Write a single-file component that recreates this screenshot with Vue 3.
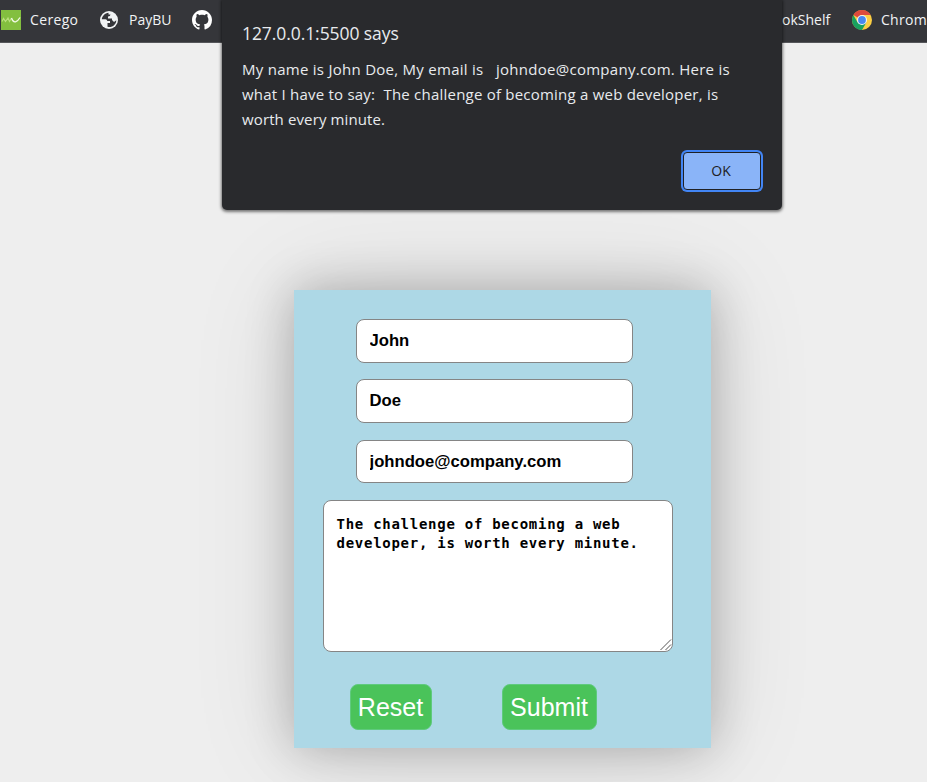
<script setup>
import { ref } from 'vue'

const first = ref('John')
const last = ref('Doe')
const email = ref('johndoe@company.com')
const message = ref('The challenge of becoming a web developer, is worth every minute.')
</script>

<template>
  <div class="page">
    <nav class="bookmarks">
      <div class="group">
        <svg class="cerego" viewBox="0 0 20 20">
          <rect width="20" height="20" fill="#83bf3f" />
          <path d="M1 11.500 L2.500 8.500 L4.500 11.500 L7 8 L8.500 11.500 L10.500 8" fill="none" stroke="#b9e07c" stroke-width="1.200" />
          <path d="M10.500 8 Q12 12.500 14.500 11.800 Q17 11 19 7.500" fill="none" stroke="#f2fae6" stroke-width="1.300" />
        </svg>
        <span class="cerego-label">Cerego</span>
        <svg class="globe" viewBox="0 0 18 18">
          <circle cx="9" cy="9" r="9" fill="#f1f3f4" />
          <path d="M8.500 1.700 C5 2 2 5 1.800 8.300 H5.500 Q7 8.500 7.300 10 H10 V12 H7.500 V15.800 C12 17 16.300 13.500 16.300 9.200 L14 11 L12 9 V7.500 H8 V5.500 Q10.500 5.500 10.500 3.500 H8.500 Z" fill="#35363a" />
        </svg>
        <span class="paybu-label">PayBU</span>
        <svg class="github" viewBox="0 0 16 16">
          <path fill="#fff" d="M8 0C3.58 0 0 3.58 0 8c0 3.54 2.29 6.53 5.47 7.590.4.070.55-.17.55-.38 0-.19-.01-.82-.01-1.490-2.010.37-2.530-.49-2.690-.94-.09-.23-.48-.94-.82-1.130-.28-.15-.68-.52-.01-.530.63-.01 1.080.58 1.230.820.72 1.210 1.870.87 2.330.660.07-.520.28-.870.510-1.070-1.780-.2-3.640-.89-3.640-3.950 0-.870.31-1.590.82-2.150-.08-.2-.36-1.020.08-2.120 0 0 .67-.21 2.200.820.64-.18 1.320-.27 2-.270s1.360.09 2 .270c1.530-1.040 2.200-.82 2.200-.820.44 1.100.16 1.920.08 2.120.510.560.820 1.270.820 2.150 0 3.070-1.870 3.750-3.650 3.950.290.250.540.730.540 1.480 0 1.070-.01 1.930-.01 2.200 0 .210.150.460.550.380A8.010 8.010 0 0 0 16 8c0-4.420-3.580-8-8-8z" />
        </svg>
      </div>
      <div class="group right">
        <span class="shelf-label">okShelf</span>
        <svg class="chrome" viewBox="0 0 20 20">
          <circle cx="10" cy="10" r="10" fill="#fbce43" />
          <path d="M10 10 L1.340 5 A10 10 0 0 1 18.660 5 H10 Z" fill="#dd4a3c" />
          <path d="M1.340 5 A10 10 0 0 0 10 20 L14.330 12.500 L10 10 L5.670 12.500 Z" fill="#18a15f" />
          <circle cx="10" cy="10" r="5" fill="#f5f5f5" />
          <circle cx="10" cy="10" r="3.900" fill="#4788f0" />
        </svg>
        <span class="chrome-label">Chrom</span>
      </div>
    </nav>

    <main class="content">
      <form class="contact" @submit.prevent>
        <input v-model="first" class="field" type="text" />
        <input v-model="last" class="field" type="text" />
        <input v-model="email" class="field email" type="text" />
        <div class="area-wrap">
          <textarea v-model="message" class="field area" spellcheck="false"></textarea>
          <svg class="grip" viewBox="0 0 12 12">
            <path d="M0.500 11 L11 0.500 M5.500 11 L11 5.500" fill="none" stroke="#555" stroke-width="1" />
          </svg>
        </div>
        <div class="actions">
          <button type="button" class="btn reset">Reset</button>
          <button type="button" class="btn submit">Submit</button>
        </div>
      </form>
    </main>

    <section class="dialog" role="alertdialog">
      <h1 class="title">127.0.0.1:5500 says</h1>
      <p class="text">
        <span class="l1">My name is John Doe, My email is &nbsp; johndoe@company.com. Here is</span>
        <span class="l2">what I have to say:&nbsp; The challenge of becoming a web developer, is</span>
        <span class="l3">worth every minute.</span>
      </p>
      <button type="button" class="ok">OK</button>
    </section>
  </div>
</template>

<style>
body {
  background: #eeeeee;
  overflow: hidden;
}
</style>

<style scoped>
.page {
  position: relative;
  width: 927px;
  height: 782px;
  overflow: hidden;
  background: #eeeeee;
  font-family: "Open Sans", "Noto Sans", sans-serif;
}
.bookmarks {
  box-sizing: border-box;
  display: flex;
  justify-content: space-between;
  height: 43px;
  padding-bottom: 2px;
  background: #35363a;
  border-bottom: 1px solid #55565a;
  color: #f1f3f4;
  font-size: 14px;
  line-height: 20px;
  white-space: nowrap;
}
.group {
  display: flex;
  align-items: center;
  padding-left: 1px;
}
.right {
  width: 145px;
  padding-left: 0;
}
svg {
  display: block;
  flex: none;
}
.cerego,
.github,
.chrome {
  width: 20px;
  height: 20px;
}
.cerego-label {
  width: 48px;
  margin: 0 22px 0 9px;
  letter-spacing: 0.350px;
}
.globe {
  width: 18px;
  height: 18px;
}
.paybu-label {
  width: 43px;
  margin: 0 20px 0 11px;
}
.shelf-label {
  width: 50px;
  margin-right: 20px;
}
.chrome-label {
  margin-left: 9px;
  letter-spacing: 0.300px;
}
.content {
  padding: 247px 0 0 293.500px;
}
.contact {
  box-sizing: border-box;
  display: flex;
  flex-direction: column;
  width: 417.500px;
  height: 458px;
  padding: 29px 0 0 29px;
  background: #add8e6;
  box-shadow: 0 0 45px rgba(0, 0, 0, 0.24), 0 0 100px rgba(0, 0, 0, 0.12);
}
.field {
  box-sizing: border-box;
  width: 277px;
  height: 44px;
  margin: 0 0 16px 33px;
  padding: 0 13px;
  border: 1px solid #858585;
  border-radius: 8px;
  background: #fff;
  color: #000;
  font: bold 16.670px "Liberation Sans", sans-serif;
  outline: none;
}
.email {
  height: 43px;
  margin-top: 1px;
  margin-bottom: 17px;
}
.area-wrap {
  position: relative;
  width: 350px;
  height: 152px;
}
.area {
  display: block;
  width: 350px;
  height: 152px;
  margin: 0;
  padding: 14px 13px;
  resize: none;
  overflow: hidden;
  font: bold 14px/19px "DejaVu Sans Mono", monospace;
  letter-spacing: 0.730px;
}
.grip {
  position: absolute;
  right: 1px;
  bottom: 1px;
  width: 12px;
  height: 12px;
}
.actions {
  display: flex;
  gap: 70px;
  padding: 32px 0 0 27px;
}
.btn {
  box-sizing: border-box;
  height: 46px;
  padding: 0;
  border: 1px solid #5fca7e;
  border-radius: 8px;
  background: #4ac35a;
  color: #fff;
  font: 25px "Liberation Sans", sans-serif;
}
.reset {
  width: 82px;
}
.submit {
  width: 95px;
}
.dialog {
  position: absolute;
  top: 0;
  left: 222px;
  box-sizing: border-box;
  display: flex;
  flex-direction: column;
  width: 560px;
  height: 210px;
  padding: 21px 19px 0 20px;
  border-radius: 0 0 5px 5px;
  background: #292a2d;
  box-shadow: 0 1px 3px 1px rgba(0, 0, 0, 0.5);
  color: #e8eaed;
}
.title {
  margin: 0 0 11px;
  font-size: 17.500px;
  font-weight: 400;
  line-height: 25px;
  letter-spacing: -0.080px;
}
.text {
  display: flex;
  flex-direction: column;
  align-items: flex-start;
  margin: 0;
  font-size: 15px;
  line-height: 25px;
  white-space: nowrap;
}
.l1 {
  letter-spacing: 0.270px;
}
.l2 {
  letter-spacing: 0.220px;
}
.l3 {
  letter-spacing: 0.120px;
}
.ok {
  align-self: flex-end;
  box-sizing: border-box;
  width: 78px;
  height: 38px;
  margin: 20px 2px 0 0;
  padding: 0 2px 2px 0;
  border: 1px solid #202124;
  border-radius: 4px;
  background: #8ab4f8;
  box-shadow: 0 0 0 2px #4285f4;
  color: #202124;
  font: 14px "Open Sans", sans-serif;
}
</style>
